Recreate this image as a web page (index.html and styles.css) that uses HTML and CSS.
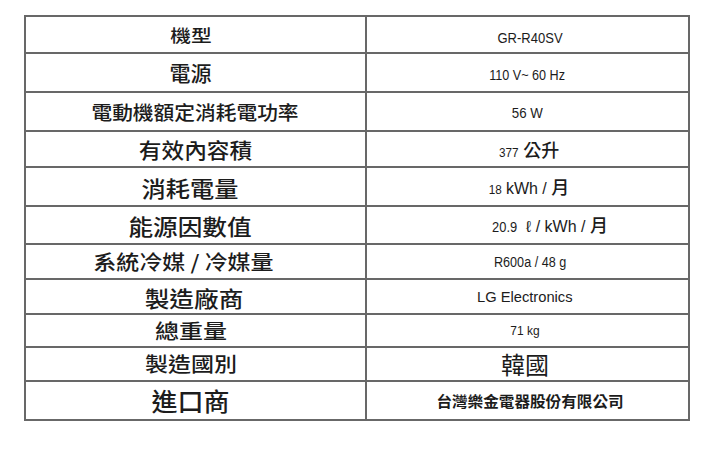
FILE: index.html
```html
<!DOCTYPE html>
<html lang="zh-Hant">
<head>
<meta charset="utf-8">
<title>規格表</title>
<link rel="stylesheet" href="styles.css">
</head>
<body>
<div class="spec">
  <div class="cell label"><span class="t l1">機型</span></div>
  <div class="cell value top"><span class="t lat v1">GR-R40SV</span></div>

  <div class="cell label"><span class="t l2">電源</span></div>
  <div class="cell value down2"><span class="t lat v2">110 V~ 60 Hz</span></div>

  <div class="cell label"><span class="t l3">電動機額定消耗電功率</span></div>
  <div class="cell value down1"><span class="t lat v3">56 W</span></div>

  <div class="cell label"><span class="t l4">有效內容積</span></div>
  <div class="cell value"><span class="t mix v4"><span class="sm">377</span> <span class="cj">公升</span></span></div>

  <div class="cell label"><span class="t l5">消耗電量</span></div>
  <div class="cell value"><span class="t mix v5"><span class="sm">18</span> <span class="md">kWh / </span><span class="cj2">月</span></span></div>

  <div class="cell label"><span class="t l6">能源因數值</span></div>
  <div class="cell value shift"><span class="t mix v6"><span class="sm2">20.9</span>  <span class="md">ℓ / kWh / </span><span class="cj2">月</span></span></div>

  <div class="cell label"><span class="t l7">系統冷媒 / 冷媒量</span></div>
  <div class="cell value"><span class="t lat v7">R600a / 48 g</span></div>

  <div class="cell label"><span class="t l8">製造廠商</span></div>
  <div class="cell value"><span class="t lat v8">LG Electronics</span></div>

  <div class="cell label"><span class="t l9">總重量</span></div>
  <div class="cell value"><span class="t lat v9">71 kg</span></div>

  <div class="cell label"><span class="t l10">製造國別</span></div>
  <div class="cell value"><span class="t cjv v10">韓國</span></div>

  <div class="cell label"><span class="t l11">進口商</span></div>
  <div class="cell value"><span class="t cjv v11">台灣樂金電器股份有限公司</span></div>
</div>
</body>
</html>
```
FILE: styles.css
```css
html, body {
  margin: 0;
  padding: 0;
  background: #ffffff;
}

.spec {
  display: grid;
  grid-template-columns: 341px 323px;
  grid-template-rows: 37px 39px 39px 36px 39px 38px 35px 35px 33px 34px 39px;
  width: max-content;
  margin: 15px 0 0 24px;
  border-top: 2px solid #686868;
  border-left: 2px solid #686868;
}

.cell {
  border-right: 2px solid #686868;
  border-bottom: 2px solid #686868;
  display: flex;
  align-items: center;
  justify-content: center;
  color: #1c1c1c;
}

.t {
  display: inline-block;
  white-space: pre;
  line-height: 1;
  transform-origin: center center;
}

.label .t {
  font-family: "Noto Sans CJK TC", "Noto Sans CJK SC", sans-serif;
  font-weight: 500;
  margin-right: 10px;
}

.l1 { font-size: 17px; transform: scaleX(1.22); }
.l2 { font-size: 21px; transform: scaleX(1.0); }
.l3 { font-size: 19px; transform: scaleX(1.09); margin-right: 0 !important; }
.l4 { font-size: 21px; transform: scaleX(1.08); margin-right: 0 !important; }
.l5 { font-size: 22px; transform: scaleX(1.1); }
.l6 { font-size: 22px; transform: scaleX(1.12); }
.l7 { font-size: 20px; transform: scaleX(1.15); margin-right: 24px !important; }
.l8 { font-size: 22px; transform: scaleX(1.12); margin-right: 2px !important; }
.l9 { font-size: 20px; transform: scaleX(1.2); }
.l10 { font-size: 20px; transform: scaleX(1.15); }
.l11 { font-size: 25px; transform: scaleX(1.04); }

.lat, .mix {
  font-family: "Liberation Sans", Arial, "Noto Sans CJK TC", sans-serif;
}

.top { padding-top: 7px; }
.down2 { padding-top: 4px; }
.down1 { padding-top: 2px; }

.v1 { font-size: 14px; transform: scaleX(0.93); margin-left: 5px; }
.v2 { font-size: 14px; transform: scaleX(0.9); }
.v3 { font-size: 14px; transform: scaleX(0.95); }
.v4 { font-size: 13px; margin-left: 2px; }
.v5 { font-size: 13px; margin-left: 2px; }
.v6 { font-size: 14px; }
.v7 { font-size: 14px; transform: scaleX(0.9); margin-left: 5px; }
.v8 { font-size: 15px; transform: scaleX(0.98); margin-right: 6px; }
.v9 { font-size: 13px; transform: scaleX(0.92); margin-right: 5px; }
.v10 { font-size: 24px; font-weight: 400; margin-right: 5px; }
.v11 { font-size: 15px; font-weight: 700; transform: scaleX(1.04); margin-left: 5px; }

.cjv {
  font-family: "Noto Sans CJK TC", "Noto Sans CJK SC", sans-serif;
}

.shift { padding-left: 44px; }

.sm { font-size: 13px; display: inline-block; transform: scaleX(0.9); }
.sm2 { font-size: 14px; display: inline-block; transform: scaleX(0.92); }
.md { font-size: 16px; }
.cj { font-family: "Noto Sans CJK TC", sans-serif; font-size: 18px; font-weight: 500; }
.cj2 { font-family: "Noto Sans CJK TC", sans-serif; font-size: 18px; font-weight: 500; }
```
